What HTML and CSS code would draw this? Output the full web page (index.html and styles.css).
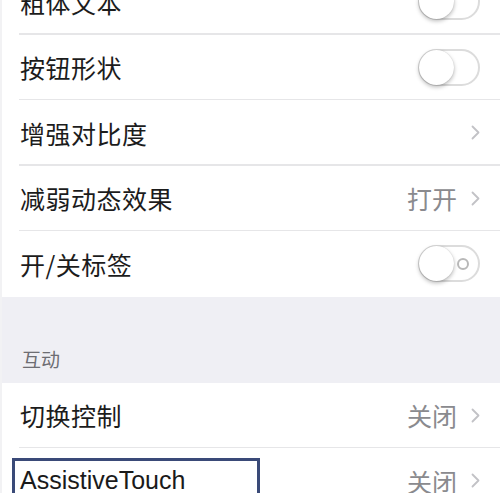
FILE: index.html
```html
<!DOCTYPE html>
<html lang="zh-CN">
<head>
<meta charset="utf-8">
<link rel="stylesheet" href="styles.css">
</head>
<body>
<div class="screen">
  <div class="group">
    <div class="row"><span class="label">粗体文本</span><span class="toggle"><span class="knob"></span></span></div>
    <div class="row"><span class="label">按钮形状</span><span class="toggle"><span class="knob"></span></span></div>
    <div class="row"><span class="label">增强对比度</span><span class="accessory"><svg class="chev" viewBox="0 0 9 15"><path d="M1.5 1.5 L7.5 7.5 L1.5 13.5"/></svg></span></div>
    <div class="row"><span class="label">减弱动态效果</span><span class="accessory"><span class="value">打开</span><svg class="chev" viewBox="0 0 9 15"><path d="M1.5 1.5 L7.5 7.5 L1.5 13.5"/></svg></span></div>
    <div class="row last"><span class="label">开/关标签</span><span class="toggle"><span class="knob"></span><span class="off-mark"></span></span></div>
  </div>
  <div class="section-header">互动</div>
  <div class="group">
    <div class="row"><span class="label">切换控制</span><span class="accessory"><span class="value">关闭</span><svg class="chev" viewBox="0 0 9 15"><path d="M1.5 1.5 L7.5 7.5 L1.5 13.5"/></svg></span></div>
    <div class="row last"><span class="label latin">AssistiveTouch</span><span class="accessory"><span class="value">关闭</span><svg class="chev" viewBox="0 0 9 15"><path d="M1.5 1.5 L7.5 7.5 L1.5 13.5"/></svg></span><span class="mark-box"></span></div>
  </div>
</div>
</body>
</html>
```
FILE: styles.css
```css
html, body {
  margin: 0;
  padding: 0;
  background: #ffffff;
  overflow: hidden;
}
body {
  width: 500px;
  height: 493px;
  font-family: "Noto Sans CJK SC", "Noto Sans", "Liberation Sans", sans-serif;
}
.screen {
  margin-top: -31px;
  border-left: 2px solid #f2f2f4;
}
.group {
  background: #ffffff;
}
.row {
  position: relative;
  height: 65.5px;
  box-sizing: border-box;
  display: flex;
  align-items: center;
  justify-content: space-between;
  padding: 0 20px 0 18px;
}
.row::after {
  content: "";
  position: absolute;
  left: 17px;
  right: 0;
  bottom: 0;
  height: 1.5px;
  background: #e6e6e8;
}
.row.last::after {
  content: none;
}
.label {
  font-size: 25px;
  color: #1c1c1c;
  letter-spacing: 0.5px;
}
.label.latin {
  font-family: "Liberation Sans", "Noto Sans CJK SC", sans-serif;
  letter-spacing: 0;
  color: #1a1a1a;
}
.accessory {
  display: flex;
  align-items: center;
  gap: 14px;
}
.value {
  font-size: 25px;
  color: #8a8a8e;
}
.chev {
  width: 9px;
  height: 15px;
  fill: none;
  stroke: #c2c2c6;
  stroke-width: 1.8;
  stroke-linecap: round;
  stroke-linejoin: round;
}
.toggle {
  position: relative;
  width: 62px;
  height: 37px;
  box-sizing: border-box;
  border: 2px solid #dcdcdc;
  border-radius: 19px;
  background: #ffffff;
}
.knob {
  position: absolute;
  left: -1px;
  top: -1px;
  width: 35px;
  height: 35px;
  border-radius: 50%;
  background: #ffffff;
  box-shadow: 0 2px 4px rgba(0, 0, 0, 0.28), 0 0 1px rgba(0, 0, 0, 0.2);
}
.off-mark {
  position: absolute;
  right: 9px;
  top: 11px;
  width: 8px;
  height: 8px;
  border: 2px solid #b8b8b8;
  border-radius: 50%;
}
.section-header {
  background: #efeff4;
  height: 86px;
  box-sizing: border-box;
  padding: 48px 0 0 20px;
  font-size: 19px;
  color: #6d6d72;
}
.mark-box {
  position: absolute;
  left: 10px;
  top: 10px;
  width: 248px;
  height: 60px;
  box-sizing: border-box;
  border: 3px solid #3a4a78;
}
```
